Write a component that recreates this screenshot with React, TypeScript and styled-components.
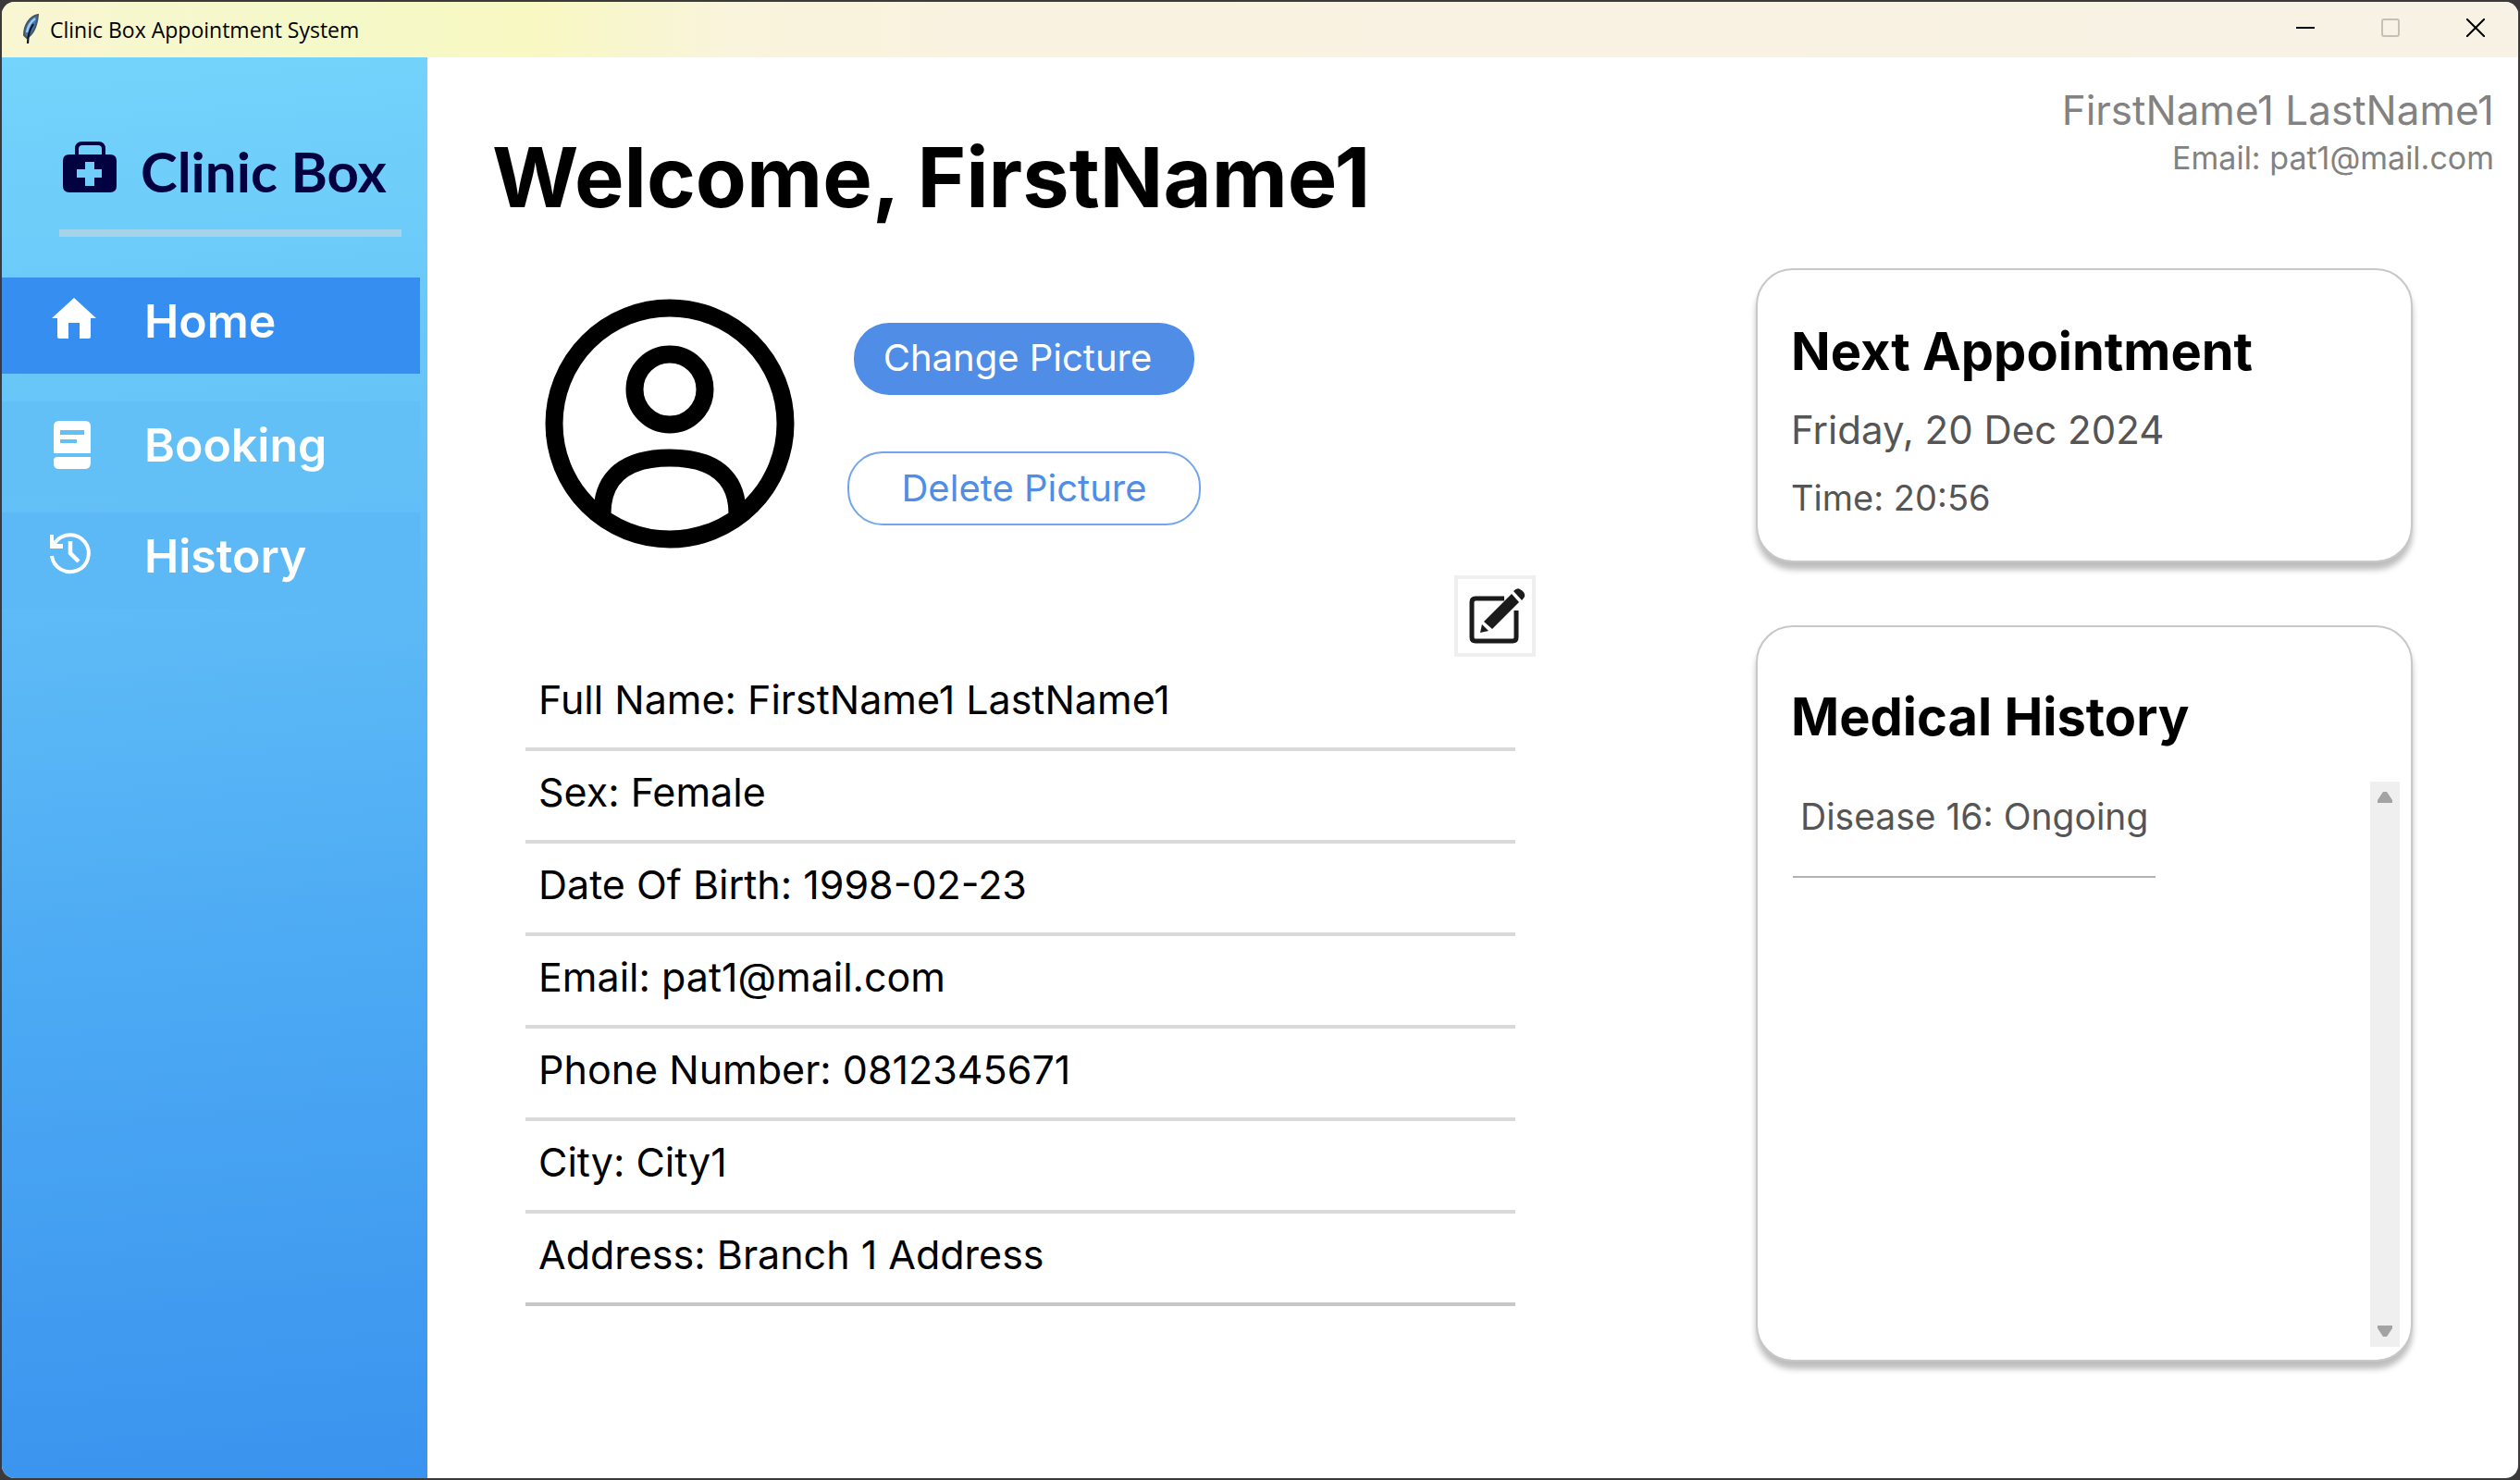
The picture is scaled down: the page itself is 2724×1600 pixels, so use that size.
import React, { useState } from "react";
import styled, { createGlobalStyle, css } from "styled-components";

const GlobalStyle = createGlobalStyle`
  *, *::before, *::after { box-sizing: border-box; }
  body { margin: 0; background: #3b3939; }
  h1, h2, p, ul { margin: 0; padding: 0; font-weight: inherit; }
  ul { list-style: none; }
  button { font: inherit; color: inherit; margin: 0; padding: 0; border: 0; background: none; cursor: pointer; }
`;

const Desktop = styled.div`
  min-height: 100vh;
  padding: 2px;
  display: flex;
  background: #3b3939;
  font-family: Inter, sans-serif;
  color: #000;
`;

const Window = styled.div`
  flex: 1;
  display: flex;
  flex-direction: column;
  overflow: hidden;
  border-radius: 14px;
  background: #fff;
`;

const TitleBar = styled.header`
  height: 60px;
  padding-left: 20px;
  display: flex;
  align-items: center;
  gap: 10px;
  background: linear-gradient(90deg, #f9f6d3 0%, #f5f9c8 13%, #f8f8c2 21%, #f9f4dc 29%, #faf2e1 40%, #f8f2e5 100%);
`;

const AppTitle = styled.span`
  flex: 1;
  font: 400 23px/32px "Open Sans", sans-serif;
`;

const ControlGroup = styled.div`
  display: flex;
  align-self: flex-start;
`;

const WindowButton = styled.button`
  width: 92px;
  height: 56px;
  display: grid;
  place-items: center;
  color: #000;
  &:disabled { color: #c4c0b6; cursor: default; }
`;

const Body = styled.div`
  flex: 1;
  display: flex;
`;

const Sidebar = styled.aside`
  width: 460px;
  flex: none;
  background: linear-gradient(175deg, #74d4fb 0%, #6ac8f8 20%, #5fbbf6 38%, #4dabf4 62%, #3a93ee 100%);
`;

const Brand = styled.div`
  margin: 80px 28px 44px 62px;
  padding: 0 4px 28px;
  display: flex;
  align-items: center;
  gap: 26px;
  border-bottom: 8px solid #a5d3ea;
  color: #01023f;
  svg { flex: none; }
`;

const BrandName = styled.span`
  padding-top: 8px;
  font: 700 60px/70px Lato, sans-serif;
  white-space: nowrap;
`;

const NavItem = styled.a<{ $tone: string; $gap: number }>`
  height: 104px;
  margin: 0 8px ${(p) => p.$gap}px 0;
  padding: 0 0 10px 50px;
  display: flex;
  align-items: center;
  gap: 48px;
  background: ${(p) => p.$tone};
  color: #fff;
  font-size: 50px;
  line-height: 60px;
  font-weight: 600;
  text-decoration: none;
  svg { flex: none; }
`;

const Main = styled.main`
  flex: 1;
  display: flex;
  justify-content: space-between;
  padding: 28px 26px 40px 70px;
`;

const Profile = styled.section`
  width: 1160px;
  flex: none;
  padding-top: 42px;
`;

const Greeting = styled.h1`
  font-size: 90px;
  line-height: 120px;
  font-weight: 700;
  white-space: nowrap;
`;

const PictureRow = styled.div`
  margin-top: 71px;
  padding-left: 57px;
  display: flex;
  gap: 57px;
`;

const PictureActions = styled.div`
  padding-top: 26px;
  display: flex;
  flex-direction: column;
  align-items: center;
  gap: 61px;
`;

const PillButton = styled.button<{ $outline?: boolean }>`
  height: 78px;
  width: 368px;
  padding: 0 14px 2px 0;
  border-radius: 38px;
  font-size: 40px;
  line-height: 48px;
  font-weight: 400;
  background: #4f8de6;
  color: #fff;
  ${(p) =>
    p.$outline &&
    css`
      width: 382px;
      height: 80px;
      padding: 0;
      background: #fff;
      border: 2px solid #72a5ee;
      color: #4f8de6;
    `}
`;

const EditButton = styled.button`
  display: grid;
  place-items: center;
  width: 88px;
  height: 88px;
  margin: 29px 32px 0 auto;
  border: 4px solid #efefef;
  background: #fff;
`;

const Details = styled.ul`
  margin: 2px 54px 0 36px;
`;

const Detail = styled.li`
  height: 100px;
  padding: 18px 14px 0;
  border-bottom: 4px solid #d9d9d9;
  font-size: 43px;
  line-height: 52px;
  white-space: nowrap;
  &:last-child { border-color: #c7c7c7; }
`;

const Side = styled.div`
  width: 798px;
  display: flex;
  flex-direction: column;
`;

const Account = styled.div`
  text-align: right;
  color: #828282;
`;

const AccountName = styled.p`
  font-size: 44px;
  line-height: 58px;
`;

const AccountEmail = styled.p`
  font-size: 34px;
  line-height: 46px;
`;

const Cards = styled.div`
  margin-top: 96px;
  display: grid;
  gap: 68px;
`;

const Card = styled.section<{ $height: number; $top: number }>`
  width: 710px;
  height: ${(p) => p.$height}px;
  border: 2px solid #c8c8c8;
  border-radius: 40px;
  box-shadow: 0 8px 6px rgba(0, 0, 0, 0.26);
  padding: ${(p) => p.$top}px 12px 14px 36px;
  background: #fff;
  display: flex;
  flex-direction: column;
  color: #555;
`;

const CardTitle = styled.h2`
  font-size: 56px;
  line-height: 64px;
  font-weight: 700;
  color: #000;
`;

const CardText = styled.p<{ $small?: boolean }>`
  margin-top: ${(p) => (p.$small ? 16 : 22)}px;
  font-size: ${(p) => (p.$small ? 38 : 42)}px;
  line-height: ${(p) => (p.$small ? 52 : 62)}px;
`;

const HistoryArea = styled.div`
  flex: 1;
  display: flex;
  justify-content: space-between;
  margin-top: 38px;
`;

const Condition = styled.li`
  padding: 12px 8px 38px;
  margin-left: 2px;
  border-bottom: 2px solid #b3b3b3;
  font-size: 39px;
  line-height: 52px;
`;

const ScrollTrack = styled.div`
  width: 32px;
  display: flex;
  flex-direction: column;
  justify-content: space-between;
  background: #efefef;
`;

const ScrollButton = styled.button`
  height: 34px;
  display: grid;
  place-items: center;
  color: #a3a3a3;
`;

const Feather = () => (
  <svg width="22" height="34" viewBox="0 0 22 34" aria-hidden="true">
    <path d="M19 1C10 3 4 12 4 23l3 3c7-4 11-14 12-25z" fill="#3b78bd" stroke="#4a565f" strokeWidth="2" />
    <path d="M16 5C12 8 8 14 7 20" stroke="#9dc7ef" strokeWidth="2.4" fill="none" />
    <path d="M14 11C10 17 8 24 8 32" stroke="#10161c" strokeWidth="2.2" fill="none" />
  </svg>
);

const MedicalBag = () => (
  <svg width="58" height="56" viewBox="0 0 58 56" aria-hidden="true">
    <path d="M15 15V8q0-6 6-6h17q6 0 6 6v7" fill="none" stroke="#01023f" strokeWidth="4" />
    <path
      fillRule="evenodd"
      fill="#01023f"
      d="M7 14h44q7 0 7 7v27q0 7-7 7H7q-7 0-7-7V21q0-7 7-7zM24 22v8h-9v9h9v9h10v-9h8v-9h-8v-8z"
    />
  </svg>
);

const HomeIcon = () => (
  <svg width="56" height="52" viewBox="0 0 56 52" aria-hidden="true">
    <path fill="#fff" d="M28 1 52 23h-6v20q0 2-2 2H34V28H22v17H12q-2 0-2-2V23H4z" />
  </svg>
);

const BookIcon = () => (
  <svg width="56" height="52" viewBox="0 0 56 52" aria-hidden="true">
    <path
      fillRule="evenodd"
      fill="#fff"
      d="M12 0h28q6 0 6 6v29H6V6q0-6 6-6zM13 10v5h26v-5zM13 20v4h18v-4z"
    />
    <path fill="#fff" d="M10 39h36v6q0 7-6 7H12q-6 0-6-6v-3q0-4 4-4z" />
  </svg>
);

const HistoryIcon = () => (
  <svg width="56" height="52" viewBox="0 0 56 52" aria-hidden="true" fill="none" stroke="#fff">
    <path d="M4 26A20 20 0 1 0 8 11" strokeWidth="4" />
    <path d="M2 3h4v6l4 4h6v5H2z" fill="#fff" stroke="none" />
    <path d="M24 10v13l9 9" strokeWidth="4.5" />
  </svg>
);

const Avatar = () => (
  <svg width="270" height="270" viewBox="0 0 270 270" fill="none" stroke="#000" strokeWidth="19" role="img" aria-label="Profile picture">
    <circle cx="135" cy="135" r="125" />
    <circle cx="135" cy="98" r="38" />
    <path d="M62 232C62 192 88 172 135 172S208 192 208 232" />
  </svg>
);

const EditIcon = () => (
  <svg width="80" height="80" viewBox="0 0 80 80" aria-hidden="true">
    <path d="M50 21H19q-4 0-4 4v38q0 4 4 4h40q4 0 4-4V34" fill="none" stroke="#1b1b1b" strokeWidth="5" />
    <path d="M58 16l8 9-29 29-9-8z" fill="#1b1b1b" />
    <path d="M60 13q4-4 7-2 6 3 5 8-1 2-3 4z" fill="#1b1b1b" />
    <path d="M26 49l7 7-9 2z" fill="#1b1b1b" />
  </svg>
);

const Triangle = ({ down }: { down?: boolean }) => (
  <svg width="16" height="12" viewBox="0 0 16 12" aria-hidden="true">
    <path fill="currentColor" d={down ? "M0 0h16v3L10 12H6L0 3z" : "M6 0h4l6 9v3H0V9z"} />
  </svg>
);

const navItems = [
  { label: "Home", Icon: HomeIcon, tone: "#358ef0", gap: 30 },
  { label: "Booking", Icon: BookIcon, tone: "#63c0f7", gap: 16 },
  { label: "History", Icon: HistoryIcon, tone: "#5db8f6", gap: 0 },
];

const details = [
  ["Full Name", "FirstName1 LastName1"],
  ["Sex", "Female"],
  ["Date Of Birth", "1998-02-23"],
  ["Email", "pat1@mail.com"],
  ["Phone Number", "0812345671"],
  ["City", "City1"],
  ["Address", "Branch 1 Address"],
];

function WindowControls() {
  return (
    <ControlGroup>
      <WindowButton aria-label="Minimize">
        <svg width="20" height="20" viewBox="0 0 20 20">
          <path d="M0 10h20" stroke="currentColor" strokeWidth="2" />
        </svg>
      </WindowButton>
      <WindowButton aria-label="Maximize" disabled>
        <svg width="20" height="20" viewBox="0 0 20 20">
          <rect x="1" y="1" width="18" height="18" rx="2" fill="none" stroke="currentColor" strokeWidth="2" />
        </svg>
      </WindowButton>
      <WindowButton aria-label="Close">
        <svg width="20" height="20" viewBox="0 0 20 20">
          <path d="M0 0 20 20M20 0 0 20" stroke="currentColor" strokeWidth="2" />
        </svg>
      </WindowButton>
    </ControlGroup>
  );
}

export default function App() {
  const [conditions] = useState(["Disease 16: Ongoing"]);
  return (
    <Desktop>
      <GlobalStyle />
      <Window>
        <TitleBar>
          <Feather />
          <AppTitle>Clinic Box Appointment System</AppTitle>
          <WindowControls />
        </TitleBar>
        <Body>
          <Sidebar>
            <Brand>
              <MedicalBag />
              <BrandName>Clinic Box</BrandName>
            </Brand>
            <nav>
              {navItems.map(({ label, Icon, tone, gap }) => (
                <NavItem key={label} href={`#${label.toLowerCase()}`} $tone={tone} $gap={gap}>
                  <Icon />
                  {label}
                </NavItem>
              ))}
            </nav>
          </Sidebar>
          <Main>
            <Profile>
              <Greeting>Welcome, FirstName1</Greeting>
              <PictureRow>
                <Avatar />
                <PictureActions>
                  <PillButton>Change Picture</PillButton>
                  <PillButton $outline>Delete Picture</PillButton>
                </PictureActions>
              </PictureRow>
              <EditButton aria-label="Edit profile">
                <EditIcon />
              </EditButton>
              <Details>
                {details.map(([label, value]) => (
                  <Detail key={label}>
                    {label}: {value}
                  </Detail>
                ))}
              </Details>
            </Profile>
            <Side>
              <Account>
                <AccountName>FirstName1 LastName1</AccountName>
                <AccountEmail>Email: pat1@mail.com</AccountEmail>
              </Account>
              <Cards>
                <Card $height={318} $top={56}>
                  <CardTitle>Next Appointment</CardTitle>
                  <CardText>Friday, 20 Dec 2024</CardText>
                  <CardText $small>Time: 20:56</CardText>
                </Card>
                <Card $height={796} $top={65}>
                  <CardTitle>Medical History</CardTitle>
                  <HistoryArea>
                    <ul>
                      {conditions.map((c) => (
                        <Condition key={c}>{c}</Condition>
                      ))}
                    </ul>
                    <ScrollTrack>
                      <ScrollButton aria-label="Scroll up">
                        <Triangle />
                      </ScrollButton>
                      <ScrollButton aria-label="Scroll down">
                        <Triangle down />
                      </ScrollButton>
                    </ScrollTrack>
                  </HistoryArea>
                </Card>
              </Cards>
            </Side>
          </Main>
        </Body>
      </Window>
    </Desktop>
  );
}
